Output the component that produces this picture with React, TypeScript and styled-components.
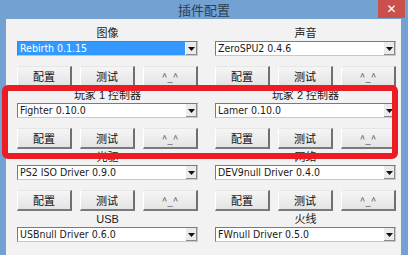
import styled, { createGlobalStyle } from "styled-components";

const GlobalStyle = createGlobalStyle`
  html, body {
    margin: 0;
    padding: 0;
    background: #ffffff;
  }
  * {
    box-sizing: border-box;
  }
`;

const Window = styled.div`
  position: relative;
  width: 408px;
  height: 255px;
  display: flex;
  flex-direction: column;
  background: #72a1d2;
  overflow: hidden;
  font-family: "Liberation Sans", "Noto Sans CJK SC", sans-serif;
`;

const TitleBar = styled.div`
  height: 21px;
  display: flex;
  align-items: center;
  justify-content: center;
  position: relative;
  color: #2f3f52;
  font-family: "Noto Sans CJK SC", sans-serif;
  font-size: 13px;
`;

const CloseBtn = styled.div`
  position: absolute;
  right: 3px;
  top: 0;
  width: 27px;
  height: 18px;
  background: #c9504b;
  color: #ffffff;
  display: flex;
  align-items: center;
  justify-content: center;
  font-size: 12px;
  font-weight: bold;
  font-family: "DejaVu Sans", sans-serif;
`;

const Body = styled.div`
  flex: 1;
  margin: 0 7px 0 6px;
  background: #f2f2f2;
  padding: 7px 5px 0 11px;
  display: grid;
  grid-template-columns: 181px 181px;
  column-gap: 17px;
  grid-auto-rows: 62px;
  align-content: start;
`;

const Cell = styled.div`
  display: flex;
  flex-direction: column;
`;

const Label = styled.div`
  height: 14px;
  line-height: 14px;
  text-align: center;
  font-size: 11px;
  color: #1a1a1a;
  font-family: "Liberation Sans", "Noto Sans CJK SC", sans-serif;
`;

const Select = styled.div`
  margin-top: 1px;
  height: 15px;
  display: flex;
  background: #ffffff;
  border: 1px solid #7a7a7a;
  border-right-color: #c8c8c8;
  border-bottom-color: #c8c8c8;
`;

const SelectText = styled.div<{ $selected?: boolean }>`
  flex: 1;
  padding-left: 2px;
  font-size: 10.5px;
  line-height: 13px;
  white-space: nowrap;
  overflow: hidden;
  color: ${(p) => (p.$selected ? "#ffffff" : "#1a1a1a")};
  background: ${(p) => (p.$selected ? "#3399ff" : "transparent")};
  font-family: "DejaVu Sans Condensed", "Liberation Sans", sans-serif;
`;

const ArrowBox = styled.div`
  width: 12px;
  height: 13px;
  display: flex;
  align-items: center;
  justify-content: center;
  background: #ebebeb;
  border-left: 1px solid #ffffff;
  box-shadow: inset -1px -1px 0 #8a8a8a;
`;

const ButtonRow = styled.div`
  margin-top: 10px;
  display: grid;
  grid-template-columns: repeat(3, 1fr);
  column-gap: 8px;
  height: 21px;
`;

const Button = styled.div<{ $faint?: boolean }>`
  display: flex;
  align-items: center;
  justify-content: center;
  background: linear-gradient(#f5f5f5, #e4e4e4);
  border-top: 1px solid #e6e6e6;
  border-left: 1px solid #ffffff;
  border-right: 2px solid #6f6f6f;
  border-bottom: 2px solid #7a7a7a;
  font-size: ${(p) => (p.$faint ? "10px" : "11px")};
  color: ${(p) => (p.$faint ? "#555555" : "#111111")};
  font-family: "Noto Sans CJK SC", sans-serif;
`;

const Highlight = styled.div`
  position: absolute;
  left: 2px;
  top: 85px;
  width: 396px;
  height: 74px;
  border: 6px solid #ec1c24;
  border-radius: 6px;
  pointer-events: none;
`;

interface Plugin {
  label: string;
  value: string;
  selected?: boolean;
  buttons: boolean;
}

const plugins: Plugin[] = [
  { label: "图像", value: "Rebirth 0.1.15", selected: true, buttons: true },
  { label: "声音", value: "ZeroSPU2  0.4.6", buttons: true },
  { label: "玩家 1 控制器", value: "Fighter 0.10.0", buttons: true },
  { label: "玩家 2 控制器", value: "Lamer 0.10.0", buttons: true },
  { label: "光驱", value: "PS2 ISO Driver 0.9.0", buttons: true },
  { label: "网络", value: "DEV9null Driver 0.4.0", buttons: true },
  { label: "USB", value: "USBnull Driver 0.6.0", buttons: false },
  { label: "火线", value: "FWnull Driver 0.5.0", buttons: false },
];

function Arrow() {
  return (
    <ArrowBox>
      <svg width="7" height="4" viewBox="0 0 7 4">
        <polygon points="0,0 7,0 3.5,4" fill="#111" />
      </svg>
    </ArrowBox>
  );
}

export default function App() {
  return (
    <>
      <GlobalStyle />
      <Window>
        <TitleBar>
          插件配置
          <CloseBtn>✕</CloseBtn>
        </TitleBar>
        <Body>
          {plugins.map((p) => (
            <Cell key={p.label}>
              <Label>{p.label}</Label>
              <Select>
                <SelectText $selected={p.selected}>{p.value}</SelectText>
                <Arrow />
              </Select>
              {p.buttons && (
                <ButtonRow>
                  <Button>配置</Button>
                  <Button>测试</Button>
                  <Button $faint>^_^</Button>
                </ButtonRow>
              )}
            </Cell>
          ))}
        </Body>
        <Highlight />
      </Window>
    </>
  );
}
